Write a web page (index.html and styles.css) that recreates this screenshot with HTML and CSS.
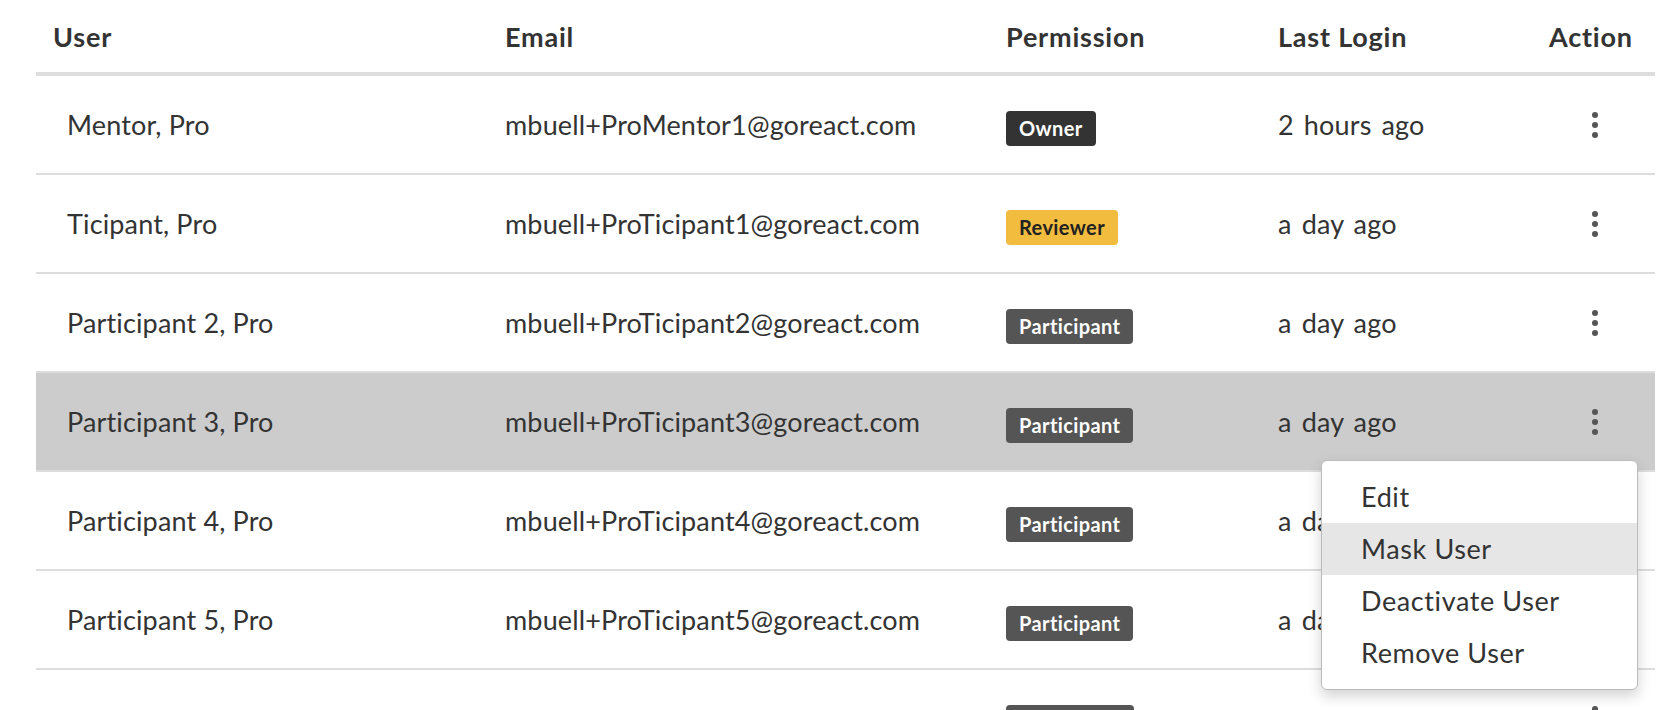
FILE: index.html
```html
<!DOCTYPE html>
<html lang="en">
<head>
<meta charset="utf-8">
<title>Users</title>
<link rel="stylesheet" href="styles.css">
</head>
<body>
<div class="page">
  <div class="table">
    <div class="row head">
      <div class="cell first">User</div>
      <div class="cell">Email</div>
      <div class="cell">Permission</div>
      <div class="cell">Last Login</div>
      <div class="cell">Action</div>
    </div>
    <div class="row">
      <div class="cell first">Mentor, Pro</div>
      <div class="cell">mbuell+ProMentor1@goreact.com</div>
      <div class="cell"><span class="badge owner">Owner</span></div>
      <div class="cell login">2 hours ago</div>
      <div class="cell"><span class="kebab"><svg width="6" height="26" viewBox="0 0 6 26"><circle cx="3" cy="3" r="3"/><circle cx="3" cy="13" r="3"/><circle cx="3" cy="23" r="3"/></svg></span></div>
    </div>
    <div class="row">
      <div class="cell first">Ticipant, Pro</div>
      <div class="cell">mbuell+ProTicipant1@goreact.com</div>
      <div class="cell"><span class="badge reviewer">Reviewer</span></div>
      <div class="cell login">a day ago</div>
      <div class="cell"><span class="kebab"><svg width="6" height="26" viewBox="0 0 6 26"><circle cx="3" cy="3" r="3"/><circle cx="3" cy="13" r="3"/><circle cx="3" cy="23" r="3"/></svg></span></div>
    </div>
    <div class="row">
      <div class="cell first">Participant 2, Pro</div>
      <div class="cell">mbuell+ProTicipant2@goreact.com</div>
      <div class="cell"><span class="badge participant">Participant</span></div>
      <div class="cell login">a day ago</div>
      <div class="cell"><span class="kebab"><svg width="6" height="26" viewBox="0 0 6 26"><circle cx="3" cy="3" r="3"/><circle cx="3" cy="13" r="3"/><circle cx="3" cy="23" r="3"/></svg></span></div>
    </div>
    <div class="row active">
      <div class="cell first">Participant 3, Pro</div>
      <div class="cell">mbuell+ProTicipant3@goreact.com</div>
      <div class="cell"><span class="badge participant">Participant</span></div>
      <div class="cell login">a day ago</div>
      <div class="cell"><span class="kebab"><svg width="6" height="26" viewBox="0 0 6 26"><circle cx="3" cy="3" r="3"/><circle cx="3" cy="13" r="3"/><circle cx="3" cy="23" r="3"/></svg></span></div>
    </div>
    <div class="row">
      <div class="cell first">Participant 4, Pro</div>
      <div class="cell">mbuell+ProTicipant4@goreact.com</div>
      <div class="cell"><span class="badge participant">Participant</span></div>
      <div class="cell login">a day ago</div>
      <div class="cell"><span class="kebab"><svg width="6" height="26" viewBox="0 0 6 26"><circle cx="3" cy="3" r="3"/><circle cx="3" cy="13" r="3"/><circle cx="3" cy="23" r="3"/></svg></span></div>
    </div>
    <div class="row">
      <div class="cell first">Participant 5, Pro</div>
      <div class="cell">mbuell+ProTicipant5@goreact.com</div>
      <div class="cell"><span class="badge participant">Participant</span></div>
      <div class="cell login">a day ago</div>
      <div class="cell"><span class="kebab"><svg width="6" height="26" viewBox="0 0 6 26"><circle cx="3" cy="3" r="3"/><circle cx="3" cy="13" r="3"/><circle cx="3" cy="23" r="3"/></svg></span></div>
    </div>
    <div class="row">
      <div class="cell first"></div>
      <div class="cell"></div>
      <div class="cell"><span class="badge participant blank"></span></div>
      <div class="cell"></div>
      <div class="cell"><span class="kebab"><svg width="6" height="26" viewBox="0 0 6 26"><circle cx="3" cy="3" r="3"/><circle cx="3" cy="13" r="3"/><circle cx="3" cy="23" r="3"/></svg></span></div>
    </div>
  </div>
  <ul class="menu">
    <li class="menu-item">Edit</li>
    <li class="menu-item hover">Mask User</li>
    <li class="menu-item">Deactivate User</li>
    <li class="menu-item">Remove User</li>
  </ul>
</div>
</body>
</html>
```

FILE: styles.css
```css
html, body {
  margin: 0;
  padding: 0;
  background: #fff;
  overflow: hidden;
}
body {
  font-family: Lato, "Liberation Sans", sans-serif;
  color: #333;
  font-size: 27px;
  letter-spacing: 0.15px;
}
.page {
  position: relative;
  width: 1666px;
  height: 710px;
  overflow: hidden;
}
.table {
  margin: 0 11px 0 36px;
}
.row {
  display: grid;
  grid-template-columns: 452px 501px 272px 271px 1fr;
  height: 97px;
  align-items: center;
  border-bottom: 2px solid #dddddd;
}
.row.head {
  height: 72px;
  border-bottom: 4px solid #dddddd;
  font-weight: 700;
  font-size: 27px;
  letter-spacing: 0.8px;
}
.row.active {
  background: #cccccc;
}
.cell {
  padding-left: 17px;
  white-space: nowrap;
}
.row .cell.first {
  padding-left: 31px;
}
.row.head .cell.first {
  padding-left: 17px;
}
.cell.login {
  word-spacing: 3px;
}
.badge {
  display: inline-block;
  box-sizing: border-box;
  font-size: 20px;
  font-weight: 700;
  letter-spacing: 0.4px;
  line-height: 35px;
  height: 35px;
  padding: 0 13px;
  border-radius: 4px;
  color: #fff;
  margin-top: 8px;
  vertical-align: middle;
}
.badge.owner { background: #333333; }
.badge.participant { background: #555555; }
.badge.reviewer { background: #f2bc3f; color: #222; }
.badge.blank { width: 128px; }
.kebab {
  display: block;
  width: 6px;
  margin-left: 43px;
  fill: #555;
  line-height: 0;
}
.kebab svg { display: block; }
.menu {
  position: absolute;
  left: 1321px;
  top: 460px;
  width: 317px;
  box-sizing: border-box;
  margin: 0;
  padding: 10px 0;
  list-style: none;
  background: #fff;
  border: 1px solid #bbbbbb;
  border-radius: 6px;
  box-shadow: 0 6px 14px rgba(0, 0, 0, 0.18);
}
.menu-item {
  height: 52px;
  line-height: 52px;
  padding-left: 39px;
  font-size: 27px;
  letter-spacing: 0.6px;
  color: #333;
}
.menu-item.hover {
  background: #e6e6e6;
}
```
